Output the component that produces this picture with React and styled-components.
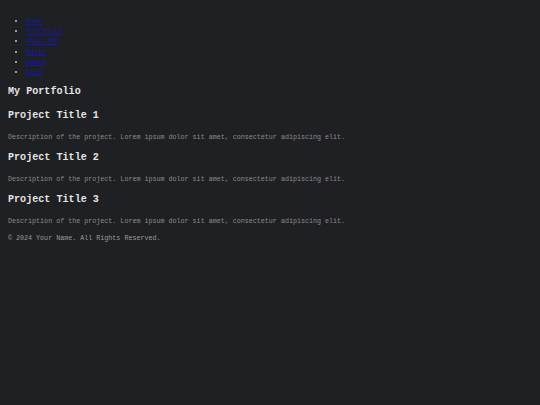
import React from "react";
import styled, { createGlobalStyle } from "styled-components";

const Global = createGlobalStyle`
  html, body { margin: 0; padding: 0; background: #1f2023; }
  body { font-family: "Liberation Mono", "Courier New", monospace; color: #e0e0e0; }
`;

const Page = styled.div`
  min-height: 405px;
  padding: 8px;
  box-sizing: border-box;
  background: #1f2023;
`;

const Nav = styled.nav``;

const NavList = styled.ul`
  margin: 8px 0 0;
  padding-left: 18px;
  list-style: disc;
  color: #c8c8c8;
  font-size: 6.7px;
  line-height: 10.2px;
`;

const NavLink = styled.a`
  color: #1616a8;
  text-decoration: underline;
  text-decoration-thickness: 1px;
`;

const Header = styled.header`
  margin-top: 9px;
`;

const Heading = styled.h1`
  margin: 0;
  font-size: 10.1px;
  line-height: 12px;
  font-weight: bold;
  color: #e4e4e4;
`;

const Main = styled.main`
  margin-top: 12px;
  display: flex;
  flex-direction: column;
  gap: 11px;
`;

const Project = styled.section`
  display: flex;
  flex-direction: column;
  gap: 11px;
`;

const ProjectTitle = styled.h2`
  margin: 0;
  font-size: 10.1px;
  line-height: 12px;
  font-weight: bold;
  color: #e4e4e4;
`;

const Text = styled.p`
  margin: 0;
  font-size: 6.7px;
  line-height: 8px;
  color: ${(p) => p.$color || "#8c8c8c"};
`;

const Footer = styled.footer`
  margin-top: 9px;
`;

const links = ["Home", "Portfolio", "About Me", "Music", "Games", "Blog"];

export default function App() {
  return (
    <Page>
      <Global />
      <Nav>
        <NavList>
          {links.map((l) => (
            <li key={l}>
              <NavLink href="#">{l}</NavLink>
            </li>
          ))}
        </NavList>
      </Nav>
      <Header>
        <Heading>My Portfolio</Heading>
      </Header>
      <Main>
        {[1, 2, 3].map((n) => (
          <Project key={n}>
            <ProjectTitle>Project Title {n}</ProjectTitle>
            <Text>
              Description of the project. Lorem ipsum dolor sit amet, consectetur adipiscing elit.
            </Text>
          </Project>
        ))}
      </Main>
      <Footer>
        <Text $color="#9a9a9a">© 2024 Your Name. All Rights Reserved.</Text>
      </Footer>
    </Page>
  );
}
